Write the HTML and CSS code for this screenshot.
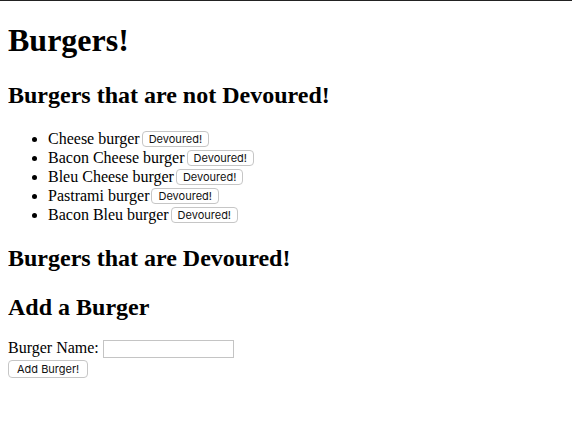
FILE: index.html
```html
<!DOCTYPE html>
<html>
<head>
<meta charset="utf-8">
<title>Burgers</title>
<link rel="stylesheet" href="styles.css">
</head>
<body>
<h1 class="title">Burgers!</h1>
<h2 class="sec">Burgers that are not Devoured!</h2>
<ul class="list">
<li>Cheese burger<button class="btn">Devoured!</button></li>
<li>Bacon Cheese burger<button class="btn">Devoured!</button></li>
<li>Bleu Cheese burger<button class="btn">Devoured!</button></li>
<li>Pastrami burger<button class="btn">Devoured!</button></li>
<li>Bacon Bleu burger<button class="btn">Devoured!</button></li>
</ul>
<h2 class="sec sec-done">Burgers that are Devoured!</h2>
<h2 class="sec sec-add">Add a Burger</h2>
<form class="form">
<label>Burger Name: <input class="field" type="text"></label><br>
<button class="btn submit" type="button">Add Burger!</button>
</form>
</body>
</html>
```
FILE: styles.css
```css
html {
  border-top: 1px solid #222;
}
body {
  margin: 0 8px 8px;
  padding: 0;
  font-family: "Liberation Serif", "Times New Roman", serif;
  font-size: 16px;
  color: #000;
  background: #fff;
}
.title {
  font-size: 32px;
  margin: 21px 0 23px;
}
.sec {
  font-size: 24px;
  margin: 20px 0;
}
.sec-done {
  margin-top: 21px;
  margin-bottom: 22px;
}
.sec-add {
  margin-bottom: 17px;
}
.list {
  margin: 16px 0;
  padding-left: 40px;
  line-height: 19px;
}
.btn {
  font-family: Inter, "Liberation Sans", Arial, sans-serif;
  font-size: 11px;
  line-height: 12px;
  color: #111;
  background: #fff;
  border: 1px solid #c6c6c6;
  border-radius: 4px;
  padding: 1px 6px;
  margin: 0 2px;
  vertical-align: 1px;
}
.form {
  line-height: 19px;
}
.field {
  width: 127px;
  height: 14px;
  border: 1px solid #c4c4c4;
  padding: 1px 1px;
  margin: 0;
  font-size: 13px;
  vertical-align: baseline;
}
.submit {
  margin: 2px 0 0;
  padding: 2px 8px;
}
```
